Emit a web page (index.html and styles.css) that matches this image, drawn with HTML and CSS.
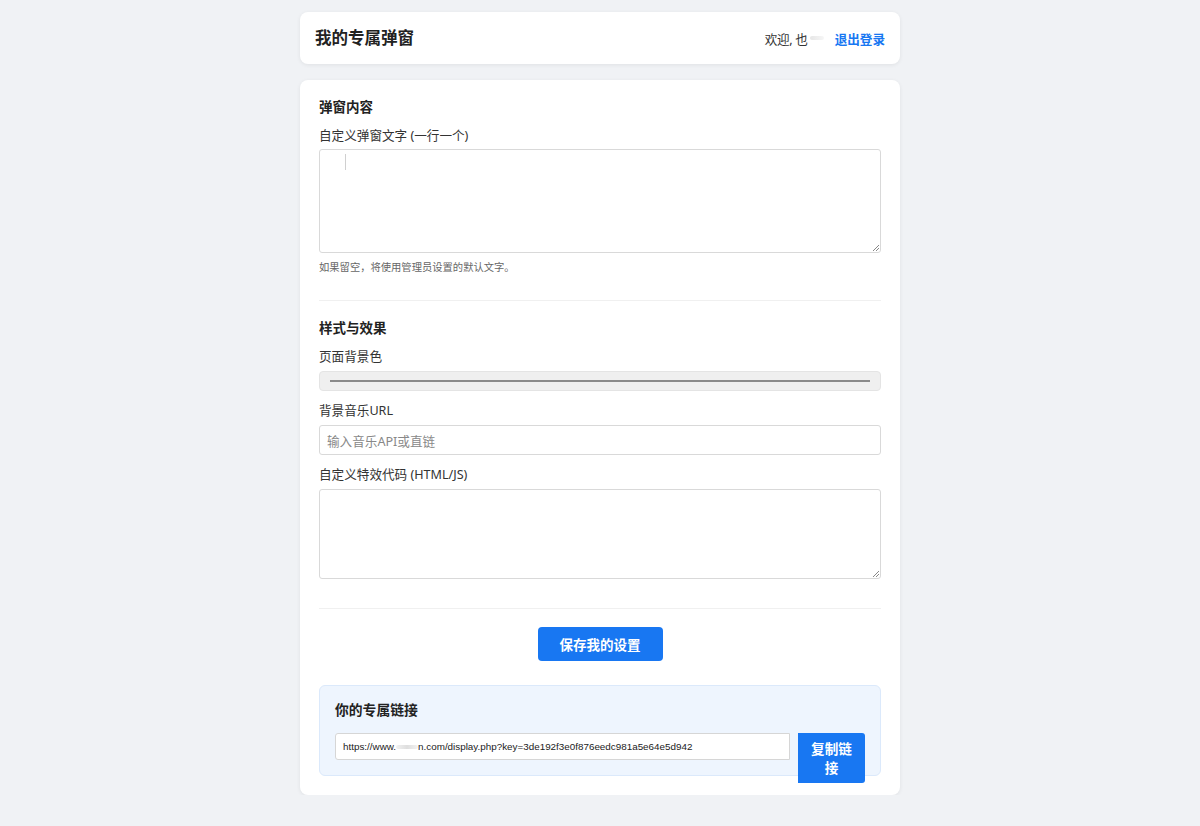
FILE: index.html
```html
<!DOCTYPE html>
<html lang="zh-CN">
<head>
<meta charset="utf-8">
<title>我的专属弹窗</title>
<link rel="stylesheet" href="styles.css">
</head>
<body>
<div class="container">
  <header class="topbar">
    <h1 class="title">我的专属弹窗</h1>
    <div class="user">
      <span class="welcome">欢迎,&nbsp;也<span class="blur">&nbsp;</span></span>
      <a class="logout" href="#">退出登录</a>
    </div>
  </header>

  <main class="card">
    <section class="section section-first">
      <h3 class="section-title">弹窗内容</h3>
      <div class="field">
        <label class="label">自定义弹窗文字 (一行一个)</label>
        <div class="textarea ta-main"><span class="caret"></span><span class="grip"></span></div>
        <p class="hint">如果留空，将使用管理员设置的默认文字。</p>
      </div>
    </section>

    <section class="section">
      <h3 class="section-title">样式与效果</h3>
      <div class="field">
        <label class="label">页面背景色</label>
        <div class="color-input"><span class="swatch"></span></div>
      </div>
      <div class="field">
        <label class="label">背景音乐URL</label>
        <div class="text-input"><span class="placeholder">输入音乐API或直链</span></div>
      </div>
      <div class="field">
        <label class="label">自定义特效代码 (HTML/JS)</label>
        <div class="textarea ta-code"><span class="grip"></span></div>
      </div>
    </section>

    <div class="actions">
      <button class="btn-save">保存我的设置</button>
    </div>

    <div class="link-box">
      <h3 class="link-title">你的专属链接</h3>
      <div class="link-row">
        <div class="link-input">https://www.<span class="blur-url"></span>n.com/display.php?key=3de192f3e0f876eedc981a5e64e5d942</div>
        <button class="btn-copy">复制链接</button>
      </div>
    </div>
  </main>
</div>
</body>
</html>
```

FILE: styles.css
```css
* { box-sizing: border-box; }
html, body { margin: 0; padding: 0; }
body {
  background: #f0f2f5;
  font-family: "Noto Sans", "Noto Sans CJK SC", sans-serif;
  color: #333;
}
.container {
  width: 600px;
  margin: 12px auto 0;
}
.topbar {
  height: 52px;
  background: #fff;
  border-radius: 8px;
  box-shadow: 0 1px 4px rgba(0,0,0,0.07);
  display: flex;
  align-items: center;
  justify-content: space-between;
  padding: 0 15px;
}
.title {
  margin: 0;
  font-size: 16.5px;
  font-weight: 700;
  color: #222;
  line-height: 20px;
}
.user {
  display: flex;
  align-items: center;
  gap: 11px;
  font-size: 12.6px;
}
.welcome { color: #333; display: flex; align-items: center; letter-spacing: -0.3px; }
.blur {
  display: inline-block;
  width: 14px;
  height: 4px;
  margin-left: 2px;
  background: linear-gradient(90deg, #e6e6e6, #f6f6f6);
  border-radius: 2px;
}
.logout {
  color: #1877f2;
  font-weight: 700;
  text-decoration: none;
}
.card {
  margin-top: 16px;
  background: #fff;
  border-radius: 8px;
  box-shadow: 0 1px 4px rgba(0,0,0,0.07);
  padding: 18px 19px 19px;
}
.section {
  padding-bottom: 18px;
  border-bottom: 1px solid #f0f0f0;
  margin-bottom: 18px;
}
.section-first { padding-bottom: 16px; }
.section-title {
  margin: 0 0 11px;
  font-size: 13.5px;
  line-height: 18px;
  font-weight: 700;
  color: #222;
}
.field { margin-bottom: 11px; }
.label {
  display: block;
  font-size: 12.6px;
  line-height: 18px;
  margin-bottom: 5px;
  color: #333;
}
.section-first .label { margin-bottom: 4px; }
.textarea {
  position: relative;
  display: block;
  border: 1px solid #d9d9d9;
  border-radius: 3px;
  background: #fff;
}
.ta-main { height: 104px; }
.ta-code { height: 90px; }
.caret {
  position: absolute;
  left: 25px;
  top: 4px;
  width: 1px;
  height: 16px;
  background: #d0d0d0;
}
.grip {
  position: absolute;
  right: 1px;
  bottom: 1px;
  width: 6px;
  height: 6px;
  background: linear-gradient(135deg, transparent 45%, #888 45%, #888 55%, transparent 55%, transparent 70%, #888 70%, #888 80%, transparent 80%);
}
.hint {
  margin: 8px 0 0;
  font-size: 10.3px;
  line-height: 12px;
  color: #666;
}
.color-input {
  height: 20px;
  background: #efefef;
  border: 1px solid #e4e4e4;
  border-radius: 4px;
  padding: 0 10px;
  display: flex;
  align-items: center;
}
.swatch {
  display: block;
  width: 100%;
  height: 2px;
  background: #8a8a8a;
}
.text-input {
  height: 30px;
  border: 1px solid #d9d9d9;
  border-radius: 3px;
  padding: 0 7px;
  display: flex;
  align-items: center;
}
.placeholder {
  color: #888;
  font-size: 12.6px;
}
.actions {
  display: flex;
  justify-content: center;
  margin: 2px 0 24px;
}
.btn-save {
  height: 34px;
  padding: 0 22px;
  border: none;
  border-radius: 4px;
  background: #1877f2;
  color: #fff;
  font-family: "Noto Sans", "Noto Sans CJK SC", sans-serif;
  font-size: 13.5px;
  font-weight: 700;
}
.link-box {
  background: #eef5fe;
  border: 1px solid #dbe9fb;
  border-radius: 6px;
  padding: 15px;
}
.link-title {
  margin: 0 0 14px;
  font-size: 13.8px;
  line-height: 18px;
  font-weight: 700;
  color: #222;
}
.link-row {
  display: flex;
  align-items: flex-start;
  gap: 8px;
  height: 27px;
}
.link-input {
  flex: 1;
  height: 27px;
  background: #fff;
  border: 1px solid #d6d6d6;
  border-radius: 3px 0 0 3px;
  padding: 0 7px;
  display: flex;
  align-items: center;
  font-family: "Liberation Sans", Arial, sans-serif;
  font-size: 9.85px;
  color: #222;
  white-space: nowrap;
  overflow: hidden;
}
.blur-url {
  display: inline-block;
  width: 22px;
  height: 4px;
  background: linear-gradient(90deg, #f2f2f2, #dedede, #f2f2f2);
  border-radius: 2px;
}
.btn-copy {
  flex: 0 0 67px;
  width: 67px;
  padding: 6px 12px;
  border: none;
  border-radius: 0 3px 3px 0;
  background: #1877f2;
  color: #fff;
  font-family: "Noto Sans", "Noto Sans CJK SC", sans-serif;
  font-size: 13.6px;
  line-height: 19px;
  font-weight: 700;
}
```
